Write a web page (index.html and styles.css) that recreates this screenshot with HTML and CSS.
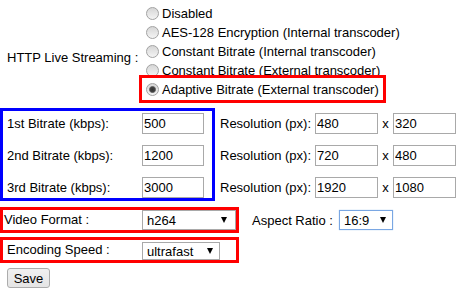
FILE: index.html
```html
<!DOCTYPE html>
<html lang="en">
<head>
    <meta charset="UTF-8">
    <title>Streaming Settings</title>
    <link rel="stylesheet" href="styles.css">
</head>
<body>

    <div class="hls">
        <div class="hls-label">HTTP Live Streaming :</div>
        <div class="modes">
            <label class="mode"><span class="radio"></span>Disabled</label>
            <label class="mode"><span class="radio"></span>AES-128 Encryption (Internal transcoder)</label>
            <label class="mode"><span class="radio"></span>Constant Bitrate (Internal transcoder)</label>
            <label class="mode"><span class="radio"></span>Constant Bitrate (External transcoder)</label>
            <label class="mode mode-picked"><span class="radio radio-on"></span>Adaptive Bitrate (External transcoder)</label>
        </div>
    </div>

    <div class="bitrates">
        <div class="bitrate-box">
            <div class="field-row"><span class="row-label">1st Bitrate (kbps):</span><input type="text" value="500"></div>
            <div class="field-row"><span class="row-label">2nd Bitrate (kbps):</span><input type="text" value="1200"></div>
            <div class="field-row"><span class="row-label">3rd Bitrate (kbps):</span><input type="text" value="3000"></div>
        </div>
        <div class="res-col">
            <div class="field-row"><span class="res-label">Resolution (px):</span><input class="res" type="text" value="480"><span class="times">x</span><input class="res" type="text" value="320"></div>
            <div class="field-row"><span class="res-label">Resolution (px):</span><input class="res" type="text" value="720"><span class="times">x</span><input class="res" type="text" value="480"></div>
            <div class="field-row"><span class="res-label">Resolution (px):</span><input class="res" type="text" value="1920"><span class="times">x</span><input class="res" type="text" value="1080"></div>
        </div>
    </div>

    <div class="opt-row video-row">
        <div class="boxed">
            <span class="opt-label video-label">Video Format :</span>
            <div class="select select-format"><span>h264</span><span class="arrow"></span></div>
        </div>
        <span class="aspect-label">Aspect Ratio :</span>
        <div class="select select-aspect"><span>16:9</span><span class="arrow"></span></div>
    </div>

    <div class="opt-row speed-row">
        <div class="boxed">
            <span class="opt-label">Encoding Speed :</span>
            <div class="select select-speed"><span>ultrafast</span><span class="arrow"></span></div>
        </div>
    </div>

    <button class="save-btn">Save</button>

</body>
</html>
```

FILE: styles.css
```css
* {
    margin: 0;
    padding: 0;
    box-sizing: border-box;
}
body {
    font-family: "Liberation Sans", Arial, sans-serif;
    font-size: 13px;
    color: #000;
    background: #fff;
}
.hls {
    display: flex;
    height: 108px;
}
.hls-label {
    width: 139px;
    padding: 48px 0 0 7px;
    line-height: 19px;
    white-space: nowrap;
}
.modes {
    display: flex;
    flex-direction: column;
    align-items: flex-start;
    padding-top: 3.5px;
}
.mode {
    display: flex;
    align-items: center;
    height: 19px;
    padding-left: 7px;
    white-space: nowrap;
}
.mode-picked {
    position: relative;
}
.mode-picked::after {
    content: "";
    position: absolute;
    left: 0;
    right: -7px;
    top: -4.5px;
    bottom: -4.5px;
    border: 3px solid #ff0000;
}
.radio {
    width: 13px;
    height: 13px;
    margin-right: 3px;
    border-radius: 50%;
    border: 1px solid #a2a2a2;
    background: linear-gradient(#d6d6d6, #f4f4f4);
}
.radio-on {
    background: radial-gradient(circle, #333 0, #444 2.5px, #8a8a8a 3.3px, transparent 3.8px),
                linear-gradient(#d6d6d6, #f4f4f4);
}
.bitrates {
    display: flex;
    align-items: flex-start;
}
.bitrate-box {
    display: flex;
    flex-direction: column;
    gap: 11px;
    border: 3px solid #0000ff;
    padding: 2px 8px 0 4px;
}
.field-row {
    display: flex;
    align-items: center;
    height: 21px;
}
.row-label {
    width: 135px;
}
input {
    width: 62px;
    height: 21px;
    border: 1px solid #a9a9a9;
    padding: 0 1px;
    font: inherit;
    color: #000;
    outline: none;
}
.res-col {
    display: flex;
    flex-direction: column;
    gap: 11px;
    margin-left: 5px;
    padding-top: 5px;
}
.res-label {
    width: 95px;
}
.res {
    width: 63px;
}
.times {
    width: 15px;
    text-align: center;
}
.opt-row {
    display: flex;
    align-items: center;
}
.video-row {
    margin-top: 6px;
}
.speed-row {
    margin-top: 4px;
}
.boxed {
    display: flex;
    align-items: flex-start;
    width: 239px;
    height: 26px;
    border: 3px solid #ff0000;
}
.opt-label {
    width: 139px;
    padding-left: 4px;
    line-height: 20px;
}
.video-label {
    padding-left: 1px;
}
.select {
    display: flex;
    align-items: center;
    justify-content: space-between;
    height: 20px;
    border: 1px solid #a9a9a9;
    padding: 0 8px 0 4px;
    background: #fff;
}
.select-format {
    width: 94px;
}
.select-speed {
    width: 78px;
    height: 18px;
    margin-top: 2px;
    padding-right: 6px;
}
.select-aspect {
    width: 54px;
    padding-right: 6px;
    border-color: #7aa7e3;
    box-shadow: 0 0 1px #9cc0ee;
}
.arrow {
    width: 0;
    height: 0;
    border-left: 3px solid transparent;
    border-right: 3px solid transparent;
    border-top: 6px solid #000;
}
.aspect-label {
    width: 87px;
    margin-left: 13px;
}
.save-btn {
    display: block;
    width: 43px;
    height: 20px;
    margin: 5px 0 0 7px;
    border: 1px solid #acacac;
    border-radius: 3px;
    background: linear-gradient(#f0f0f0, #e5e5e5);
    font: inherit;
    color: #000;
}
```
